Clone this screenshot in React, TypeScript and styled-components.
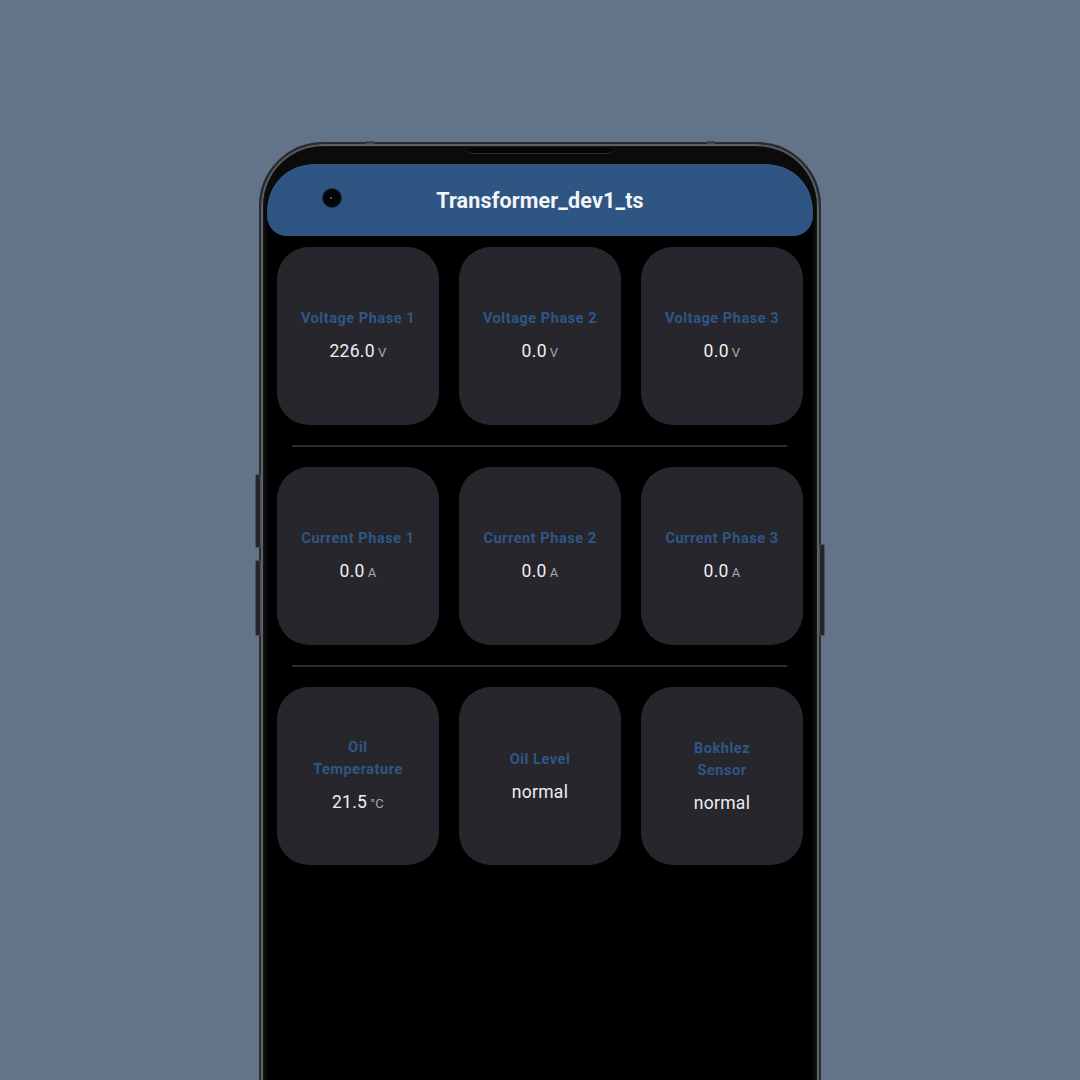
import React from "react";
import styled, { createGlobalStyle } from "styled-components";

const Global = createGlobalStyle`
  html, body { margin: 0; padding: 0; height: 1080px; overflow: hidden; }
  body { background: #637489; font-family: Roboto, "Noto Sans", sans-serif; }
  #root { height: 1080px; }
`;

const Stage = styled.div`
  height: 1080px;
  display: flex;
  justify-content: center;
  padding-top: 142px;
  box-sizing: border-box;
  overflow: hidden;
`;

const Phone = styled.div`
  position: relative;
  width: 562px;
  height: 1000px;
  box-sizing: border-box;
  border-radius: 64px 64px 0 0;
  background: #0b0b0c;
  border: 2px solid #2a2c30;
  box-shadow: inset 0 0 0 2px #5c5f66, inset 0 0 0 3px #151618;
  padding: 20px 6px 0 6px;
`;

const SideButton = styled.div<{ $side: "left" | "right"; $top: number; $h: number }>`
  position: absolute;
  top: ${(p) => p.$top}px;
  ${(p) => (p.$side === "left" ? "left: -6px;" : "right: -6px;")}
  width: 4px;
  height: ${(p) => p.$h}px;
  background: #24262a;
  border: 1px solid #4b4f56;
  border-radius: 2px;
`;

const TopBump = styled.div<{ $left: number }>`
  position: absolute;
  top: -3px;
  left: ${(p) => p.$left}px;
  width: 8px;
  height: 3px;
  background: #40444b;
`;

const Speaker = styled.div`
  position: absolute;
  top: 4px;
  left: 206px;
  width: 146px;
  height: 5px;
  background: #050505;
  border-radius: 0 0 6px 6px;
  border-bottom: 1px solid #2a2b2e;
`;

const Screen = styled.div`
  position: relative;
  height: 100%;
  background: #000;
  border-radius: 46px 46px 0 0;
  overflow: hidden;
`;

const Header = styled.div`
  height: 72px;
  background: #2f5683;
  border-radius: 46px 46px 20px 20px;
  display: flex;
  align-items: center;
  justify-content: center;
`;

const Title = styled.h1`
  margin: 0;
  color: #f2f4f7;
  font-family: Roboto, sans-serif;
  font-weight: 700;
  font-size: 21.5px;
  letter-spacing: 0.15px;
  padding-top: 1px;
`;

const Camera = styled.div`
  position: absolute;
  top: 25px;
  left: 56px;
  width: 18px;
  height: 18px;
  border-radius: 50%;
  background: #050608;
  box-shadow: 0 0 0 1px #1b2a3c;
  &::after {
    content: "";
    position: absolute;
    left: 7px;
    top: 8px;
    width: 2px;
    height: 2px;
    border-radius: 50%;
    background: #667;
  }
`;

const Content = styled.div`
  padding: 11px 10px 0 10px;
  display: flex;
  flex-direction: column;
  gap: 20px;
`;

const Row = styled.div`
  display: grid;
  grid-template-columns: repeat(3, 162px);
  justify-content: space-between;
`;

const Divider = styled.div`
  height: 2px;
  background: #2c2c2e;
  margin: 0 16px 0 15px;
`;

const Card = styled.div`
  height: 178px;
  background: #27262c;
  border-radius: 32px;
  display: flex;
  flex-direction: column;
  align-items: center;
  justify-content: center;
  text-align: center;
  gap: 10px;
`;

const Label = styled.div`
  color: #2f5686;
  font-weight: 700;
  font-size: 14.5px;
  line-height: 22px;
  letter-spacing: 0.55px;
  white-space: pre-line;
`;

const Value = styled.div`
  color: #eeeef0;
  font-size: 17.5px;
  line-height: 22px;
  letter-spacing: 0.3px;
`;

const Unit = styled.span`
  color: #a8a8ae;
  font-size: 13px;
  margin-left: 3px;
`;

type Item = { label: string; value: string; unit?: string };

const rows: Item[][] = [
  [
    { label: "Voltage Phase 1", value: "226.0", unit: "V" },
    { label: "Voltage Phase 2", value: "0.0", unit: "V" },
    { label: "Voltage Phase 3", value: "0.0", unit: "V" },
  ],
  [
    { label: "Current Phase 1", value: "0.0", unit: "A" },
    { label: "Current Phase 2", value: "0.0", unit: "A" },
    { label: "Current Phase 3", value: "0.0", unit: "A" },
  ],
  [
    { label: "Oil\nTemperature", value: "21.5", unit: "°C" },
    { label: "Oil Level", value: "normal" },
    { label: "Bokhlez\nSensor", value: "normal" },
  ],
];

export default function App() {
  return (
    <>
      <Global />
      <Stage>
        <Phone>
          <TopBump $left={105} />
          <TopBump $left={446} />
          <SideButton $side="left" $top={330} $h={72} />
          <SideButton $side="left" $top={416} $h={74} />
          <SideButton $side="right" $top={400} $h={90} />
          <Speaker />
          <Screen>
            <Header>
              <Title>Transformer_dev1_ts</Title>
            </Header>
            <Camera />
            <Content>
              {rows.map((row, i) => (
                <React.Fragment key={i}>
                  {i > 0 && <Divider />}
                  <Row>
                    {row.map((it) => (
                      <Card key={it.label}>
                        <Label>{it.label}</Label>
                        <Value>
                          {it.value}
                          {it.unit && <Unit>{it.unit}</Unit>}
                        </Value>
                      </Card>
                    ))}
                  </Row>
                </React.Fragment>
              ))}
            </Content>
          </Screen>
        </Phone>
      </Stage>
    </>
  );
}
